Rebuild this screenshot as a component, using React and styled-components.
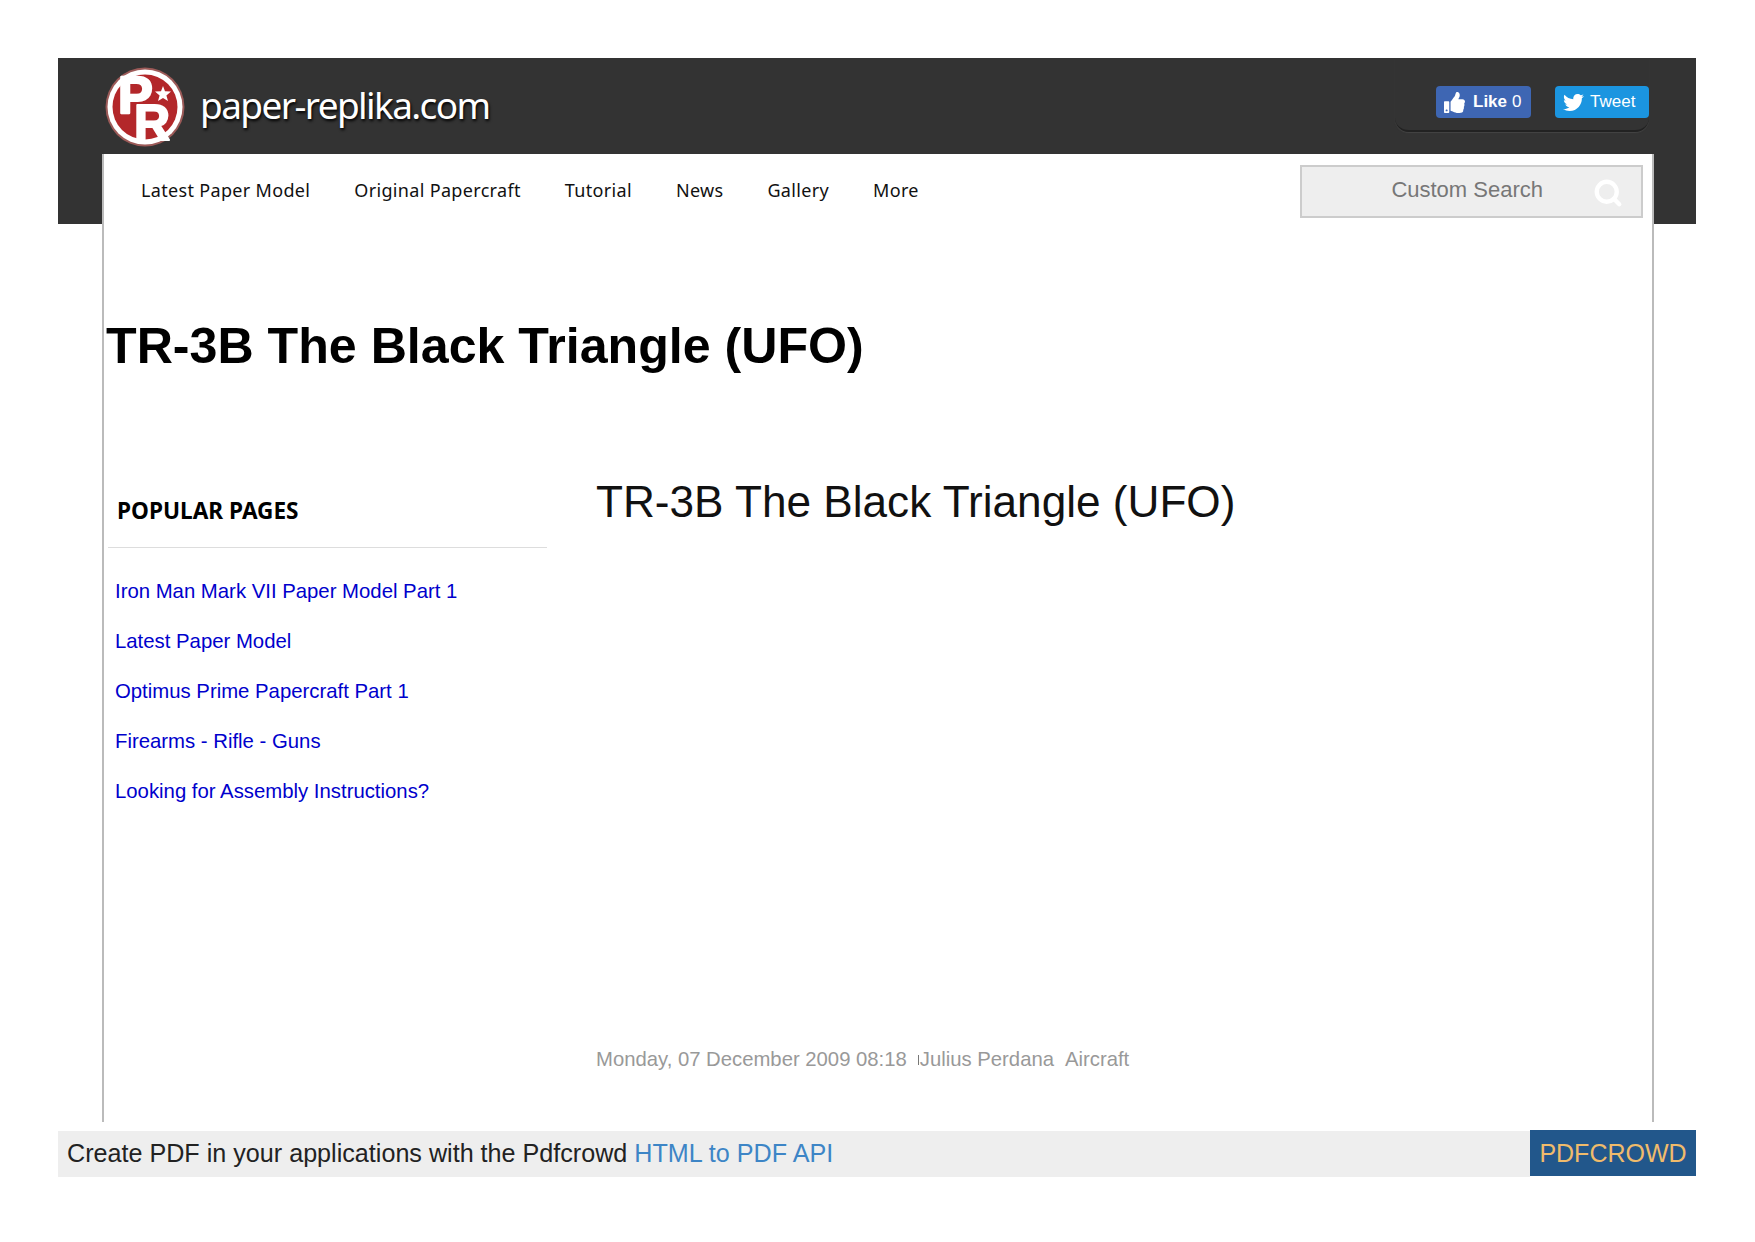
import React from "react";
import styled, { createGlobalStyle } from "styled-components";
import { Search } from "lucide-react";
import { FaThumbsUp, FaTwitter } from "react-icons/fa";

const GlobalStyle = createGlobalStyle`
  html, body { margin: 0; padding: 0; background: #fff; }
  body { font-family: "Liberation Sans", Arial, sans-serif; }
`;

const Page = styled.div`
  width: 1755px;
  height: 1242px;
  padding: 58px 58px 0;
  box-sizing: border-box;
  overflow: hidden;
`;

// fondo oscuro solo en la parte alta, el panel blanco queda encima
const Shell = styled.div`
  width: 1638px;
  height: 1064px;
  padding: 0 42px 0 44px;
  box-sizing: border-box;
  background: linear-gradient(#333 166px, transparent 166px);
`;

const TopRow = styled.header`
  height: 96px;
  display: flex;
  align-items: flex-start;
  justify-content: space-between;
`;

const Brand = styled.a`
  display: flex;
  align-items: center;
  gap: 15px;
  margin: 9px 0 0 3px;
  color: #fff;
  font-family: "Noto Sans", sans-serif;
  font-size: 37px;
  letter-spacing: -1.6px;
`;

const BrandName = styled.span`
  margin-bottom: 5px;
  text-shadow: 1px 2px 3px #000;
`;

const SocialTray = styled.div`
  display: flex;
  gap: 24px;
  justify-content: flex-end;
  width: 254px;
  height: 74px;
  margin: 0 5px 0 0;
  padding-top: 28px;
  box-sizing: border-box;
  border-bottom: 2px solid #222;
  border-radius: 0 0 14px 14px;
  box-shadow: 0 1px 1px #444;
`;

const SocialButton = styled.a`
  display: flex;
  align-items: center;
  gap: 6px;
  height: 32px;
  width: ${(props) => props.$width}px;
  padding-left: 8px;
  box-sizing: border-box;
  border-radius: 4px;
  background: ${(props) => props.$color};
  color: #fff;
  font-size: 17px;
  b { margin-left: 2px; margin-right: -1px; }
`;

const Panel = styled.div`
  height: 968px;
  background: #fff;
  border-left: 2px solid #bbb;
  border-right: 2px solid #bbb;
  box-sizing: border-box;
`;

const NavBar = styled.nav`
  display: flex;
  align-items: flex-start;
  justify-content: space-between;
  padding: 11px 9px 0 37px;
`;

const NavList = styled.div`
  display: flex;
  gap: 44px;
  padding-top: 13px;
`;

const NavLink = styled.a`
  color: #111;
  font-family: "Noto Sans", sans-serif;
  font-size: 18px;
  line-height: 24px;
  letter-spacing: 0.33px;
`;

const SearchBox = styled.div`
  width: 343px;
  height: 53px;
  display: flex;
  align-items: center;
  justify-content: flex-end;
  gap: 50px;
  padding: 0 18px 3px 0;
  box-sizing: border-box;
  background: #eee;
  border: 2px solid #ccc;
  color: #777;
  font-size: 22px;
  svg { margin-top: 5px; }
`;

const PageTitle = styled.h1`
  margin: 98px 0 0 2px;
  color: #000;
  font-size: 50.15px;
  line-height: 60px;
  font-weight: 700;
`;

const Columns = styled.div`
  display: flex;
  margin-top: 99px;
`;

const Sidebar = styled.aside`
  width: 439px;
  margin-left: 4px;
  padding-top: 19px;
`;

const SidebarTitle = styled.h3`
  margin: 0;
  padding: 0 0 19px 9px;
  border-bottom: 1px solid #ddd;
  color: #000;
  font-family: "Noto Sans", sans-serif;
  font-size: 22.6px;
  line-height: 34px;
  font-weight: 700;
`;

const LinkList = styled.div`
  display: flex;
  flex-direction: column;
  gap: 26px;
  margin: 31px 0 0 7px;
`;

const SideLink = styled.a`
  color: #0000cc;
  font-size: 20.33px;
  line-height: 24px;
`;

const Article = styled.main`
  margin-left: 49px;
  width: 900px;
`;

const ArticleTitle = styled.h2`
  margin: 0;
  color: #111;
  font-size: 44.15px;
  line-height: 54px;
  font-weight: 400;
`;

const Meta = styled.div`
  display: flex;
  margin-top: 518px;
  color: #999;
  font-size: 20.3px;
  line-height: 24px;
`;

const MetaItem = styled.span`
  margin-left: ${(props) => props.$gap || 0}px;
`;

const Tick = styled.i`
  width: 1px;
  height: 10px;
  margin: 8px 1px 0 11px;
  background: #777;
`;

const PdfBar = styled.footer`
  display: flex;
  margin-top: 8px;
  width: 1638px;
  align-items: flex-start;
`;

const PdfText = styled.div`
  flex: 1;
  height: 46px;
  margin-top: 1px;
  padding-left: 9px;
  background: #eee;
  color: #222;
  font-size: 25.15px;
  line-height: 45px;
  a { color: #3d85c6; }
`;

const PdfBrand = styled.a`
  width: 166px;
  height: 46px;
  background: #22578b;
  color: #f0bb6b;
  font-size: 25px;
  line-height: 46px;
  text-align: center;
`;

const Logo = () => (
  <svg width="80" height="80" viewBox="0 0 80 80" overflow="visible">
    <circle cx="40" cy="40" r="39.5" fill="#9c5a58" />
    <circle cx="40" cy="40" r="37.5" fill="#fff" />
    <circle cx="40" cy="40" r="32.5" fill="#b3272a" />
    <text x="13" y="46" fontFamily="Liberation Sans" fontWeight="700" fontSize="52" letterSpacing="0" fill="#fff" stroke="#fff" strokeWidth="2.5" strokeLinejoin="round">P</text>
    <text x="29" y="73" fontFamily="Liberation Sans" fontWeight="700" fontSize="50" letterSpacing="0" fill="#fff" stroke="#fff" strokeWidth="2" strokeLinejoin="round">R</text>
    <polygon fill="#fff" points="58,19 60,24.2 66,24.6 61.4,28.4 63,34 58,31 53,34 54.6,28.4 50,24.6 56,24.2" />
  </svg>
);

const navItems = ["Latest Paper Model", "Original Papercraft", "Tutorial", "News", "Gallery", "More"];
const popularPages = [
  "Iron Man Mark VII Paper Model Part 1",
  "Latest Paper Model",
  "Optimus Prime Papercraft Part 1",
  "Firearms - Rifle - Guns",
  "Looking for Assembly Instructions?",
];

const App = () => {
  return (
    <Page>
      <GlobalStyle />
      <Shell>
        <TopRow>
          <Brand>
            <Logo />
            <BrandName>paper-replika.com</BrandName>
          </Brand>
          <SocialTray>
            <SocialButton $color="#3e66b3" $width={95}>
              <FaThumbsUp size={21} />
              <b>Like</b> 0
            </SocialButton>
            <SocialButton $color="#1b95e0" $width={94}>
              <FaTwitter size={21} />
              Tweet
            </SocialButton>
          </SocialTray>
        </TopRow>
        <Panel>
          <NavBar>
            <NavList>
              {navItems.map((item) => (
                <NavLink key={item}>{item}</NavLink>
              ))}
            </NavList>
            <SearchBox>
              Custom Search
              <Search size={30} color="#fff" strokeWidth={3.5} />
            </SearchBox>
          </NavBar>
          <PageTitle>TR-3B The Black Triangle (UFO)</PageTitle>
          <Columns>
            <Sidebar>
              <SidebarTitle>POPULAR PAGES</SidebarTitle>
              <LinkList>
                {popularPages.map((page) => (
                  <SideLink key={page}>{page}</SideLink>
                ))}
              </LinkList>
            </Sidebar>
            <Article>
              <ArticleTitle>TR-3B The Black Triangle (UFO)</ArticleTitle>
              <Meta>
                <MetaItem>Monday, 07 December 2009 08:18</MetaItem>
                <Tick />
                <MetaItem>Julius Perdana</MetaItem>
                <MetaItem $gap={11}>Aircraft</MetaItem>
              </Meta>
            </Article>
          </Columns>
        </Panel>
      </Shell>
      <PdfBar>
        <PdfText>
          Create PDF in your applications with the Pdfcrowd <a>HTML to PDF API</a>
        </PdfText>
        <PdfBrand>PDFCROWD</PdfBrand>
      </PdfBar>
    </Page>
  );
};

export default App;
